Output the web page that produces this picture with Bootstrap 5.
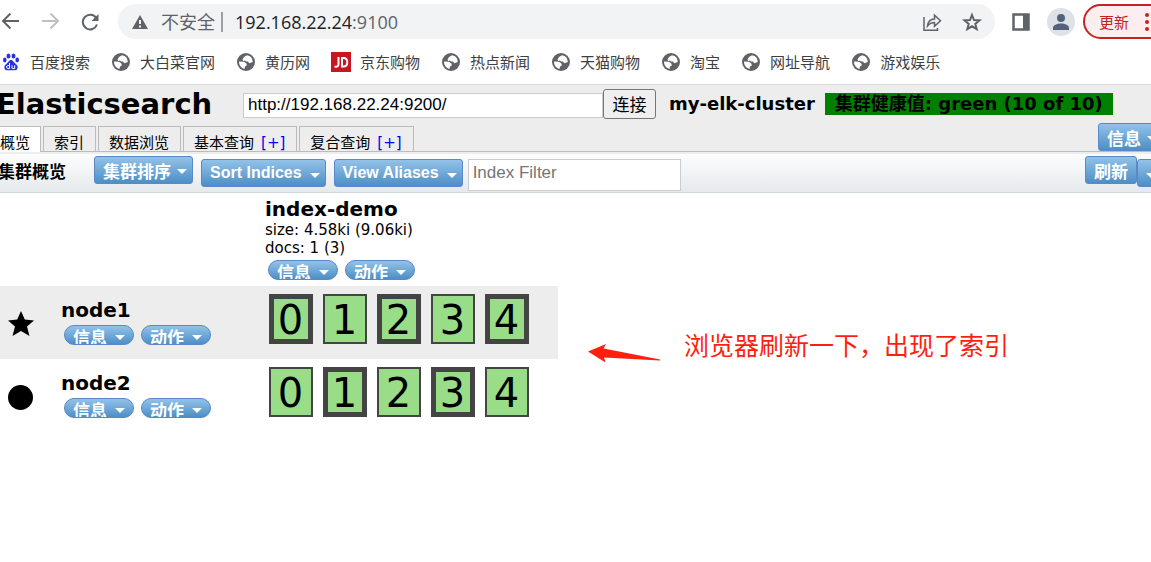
<!DOCTYPE html>
<html lang="zh-CN">
<head>
<meta charset="utf-8">
<meta name="viewport" content="width=device-width, initial-scale=1">
<title>Elasticsearch 集群概览</title>
<link rel="stylesheet" href="https://cdn.jsdelivr.net/npm/bootstrap@5.3.0/dist/css/bootstrap.min.css">
<script src="https://cdn.jsdelivr.net/npm/bootstrap@5.3.0/dist/js/bootstrap.bundle.min.js"></script>
<style>
  body { background: #fff; color: #000; overflow-x: hidden; font: 15px/18px "DejaVu Sans", "Noto Sans CJK SC", sans-serif; }
  a { text-decoration: none; }
  svg { display: block; flex: none; }
  .browser-bar, .bookmarks { font-family: "Open Sans", "Noto Sans CJK SC", sans-serif; color: #3c4043; }
  .browser-bar { height: 43px; margin-right: -30px; }
  .plain-btn { border: 0; background: none; padding: 0; }
  .nav-keys { width: 118px; padding-left: 1px; gap: 22px; }
  .omnibox { height: 35px; border-radius: 18px; background: #f1f3f4; padding: 0 13px; font-size: 18px; line-height: 24px; color: #5f6368; }
  .omnibox .divider { width: 2px; height: 20px; background: #9aa0a6; margin: 0 12px 0 6px; }
  .omnibox .host { color: #202124; }
  .avatar { width: 28px; height: 28px; background: #dee1e6; }
  .update-btn { width: 98px; height: 35px; border: 2px solid #c5221f; border-radius: 18px; background: #fceeee; color: #c5221f; font-size: 15px; padding: 0 14px; }
  .bookmarks { height: 42px; padding: 0 2px 4px; gap: 22px; border-bottom: 1px solid #dadada; }
  .bookmarks a { color: #3c4043; gap: 10px; }
  .es-page { margin: 0 -17px 0 -2px; }
  .es-head { background: #ededed; padding-bottom: 2px; }
  .es-top { height: 41px; padding: 4px 0 7px; }
  .es-title { font-size: 29px; line-height: 30px; width: 247px; margin-left: -2px; }
  .es-url { width: 360px; height: 25px; margin-top: 2px; border: 1px solid #ccc; padding: 0 4px; font: 17px "Liberation Sans", sans-serif; }
  .es-connect { width: 53px; height: 30px; border: 1px solid #767676; border-radius: 3px; background: #efefef; padding: 2px 0 0; font-size: 17px; }
  .es-cluster { font-size: 18px; line-height: 22px; font-weight: 700; margin-left: 13px; }
  .es-health { background: #008000; padding: 0 10px; margin-left: 10px; }
  .es-tabs { height: 26px; gap: 2px; border-bottom: 1px solid #bbb; }
  .es-tab { height: 25px; border: 1px solid #bbb; border-bottom: 0; padding: 6px 11px 0 10px; line-height: 20px; color: #000; white-space: pre; }
  .es-tab.current { background: #fff; height: 26px; padding: 6px 10px 0 1px; }
  .es-tab a { color: #00f; margin-left: 7px; }
  .es-info { margin-right: 5px; }
  .es-tools { height: 39px; padding-right: 6px; background: linear-gradient(#fcfdfd, #e6eaed); border-bottom: 1px solid #d0d5d9; }
  .es-tools h2 { font-size: 17px; line-height: 36px; width: 96px; font-weight: 700; }
  .blue-btn { height: 28px; border: 1px solid #5c87c8; border-radius: 3px; background: linear-gradient(#93c2e8, #4c8fc6); color: #fff; font: bold 16px/26px "Liberation Sans", "Noto Sans CJK SC", sans-serif; padding: 0 5px 0 8px; white-space: nowrap; display: flex; align-items: center; gap: 6px; flex: none; }
  .zh { font-size: 17px; padding-top: 5px; }
  .caret-down { border: 5px solid transparent; border-top-color: #fff; border-bottom: 0; margin-top: 3px; }
  .raised { margin-top: 2px; }
  .latin { margin-top: 5px; gap: 8px; }
  .latin .caret-down { margin-top: 4px; }
  .es-refresh { padding-right: 8px; }
  .es-filter { width: 213px; height: 32px; margin: 5px 0 0 5px; border: 1px solid #ccc; padding: 0 4px 4px; font: 17px "Liberation Sans", sans-serif; }
  .es-filter::placeholder { color: #757575; }
  .pills { gap: 7px; margin: 3px 0 0 3px; }
  .pill-btn { width: 70px; height: 20px; border-radius: 10px; overflow: hidden; padding: 0 8px; font-size: 17px; justify-content: space-between; }
  .pill-btn span { padding-top: 7px; }
  .pill-btn .caret-down { padding: 0; margin-top: 5px; }
  .es-body { gap: 30px; }
  .shards { width: 560px; border-collapse: collapse; flex: none; }
  .shards th, .shards td { vertical-align: top; font-weight: 400; padding: 12px 0 14px; }
  .shards thead th { padding: 4px 0 6px; }
  .shards tbody tr:nth-child(odd) { background: #ededed; }
  .shards .mark-cell { width: 63px; padding: 24px 0 0 9px; }
  .shards .name-cell { width: 204px; }
  .shards .shard-cell { padding: 8px 0 0 4px; }
  .big-name { font-size: 20px; line-height: 24px; font-weight: 700; }
  .shard-row { gap: 10px; }
  .shard { width: 44px; height: 50px; border: 2px solid #444; background: #99dd88; font-size: 40px; line-height: 40px; display: flex; align-items: center; justify-content: center; padding: 2px 1px 0 0; }
  .shard.primary { border-width: 5px; }
  .note { gap: 22px; margin-top: 132px; color: #ff1e10; font: 25px/38px "Noto Sans CJK SC", sans-serif; }
</style>
</head>
<body>
<svg class="d-none">
  <symbol id="globe" viewBox="0 0 18 18">
    <circle cx="9" cy="9" r="9" fill="#5f6368"/>
    <path fill="#fff" d="M10 2.200 7 4 5.500 6.500 6.200 8 8 7.500 9 8.500 11 8.500 12.200 10.200 15.800 9A7 7 0 0 0 10 2.200zM2 8.500 7 8.800 9.400 10.500 9.800 12.500 8 13.500 7.500 15.900A7 7 0 0 1 2 8.500z"/>
  </symbol>
</svg>

<header>
  <div class="browser-bar d-flex align-items-center">
    <div class="nav-keys d-flex align-items-center">
      <button class="plain-btn" aria-label="后退"><svg width="18" height="18" fill="none" stroke="#5f6368" stroke-width="2"><path d="M18 8H2M9.500.500 2 8l7.500 7.500"/></svg></button>
      <button class="plain-btn" aria-label="前进"><svg width="18" height="18" fill="none" stroke="#bdc1c6" stroke-width="2"><path d="M1 8h16M9.500.500 17 8l-7.500 7.500"/></svg></button>
      <button class="plain-btn" aria-label="刷新"><svg width="18" height="18"><path d="M15.200 5A7.300 7.300 0 1 0 16 11.500" fill="none" stroke="#5f6368" stroke-width="2"/><path d="M17.500 1v7h-7z" fill="#5f6368"/></svg></button>
    </div>
    <div class="omnibox d-flex align-items-center flex-grow-1">
      <svg width="18" height="16" class="me-2"><path d="M9 1 17 15H1z" fill="#5f6368"/><path d="M9 6v4M9 11.500v2" stroke="#f1f3f4" stroke-width="2"/></svg>
      <span class="ms-1">不安全</span><span class="divider"></span>
      <span class="flex-grow-1"><span class="host">192.168.22.24</span>:9100</span>
      <button class="plain-btn me-3" aria-label="分享"><svg width="20" height="20" fill="none" stroke="#5f6368" stroke-width="1.500"><path d="M2 5v13.200h13.500V16M5.500 14C6 9.500 8 7.200 12.500 7V3.200l6 5.600-6 5.500v-3.800C9.500 10.500 7.500 11.500 5.500 14z"/></svg></button>
      <button class="plain-btn ms-1" aria-label="收藏"><svg width="20" height="20" fill="none" stroke="#5f6368" stroke-width="2"><path d="m10 3 2 5 5.500.4-4.200 3.500 1.400 5.300L10 14.300l-4.700 2.900 1.400-5.300L2.500 8.400 8 8z"/></svg></button>
    </div>
    <button class="plain-btn ms-3" aria-label="侧边栏"><svg width="20" height="18"><path d="M2.500 1.500h15v15h-15z" fill="#fff" stroke="#5f6368" stroke-width="2.500"/><path d="M12 1h6v16h-6z" fill="#5f6368"/></svg></button>
    <button class="plain-btn avatar rounded-circle d-flex align-items-center justify-content-center ms-3 me-2" aria-label="用户"><svg width="16" height="16" fill="#53617a"><circle cx="8" cy="4" r="4"/><path d="M0 16v-2c0-3 4-4.500 8-4.500s8 1.500 8 4.500v2z"/></svg></button>
    <button class="update-btn d-flex align-items-center"><span class="flex-grow-1 text-start">更新</span><svg width="4" height="20" class="me-3" fill="#c5221f"><circle cx="2" cy="3" r="2"/><circle cx="2" cy="10" r="2"/><circle cx="2" cy="17" r="2"/></svg></button>
  </div>
  <nav class="bookmarks d-flex align-items-center text-nowrap" aria-label="书签">
    <a href="#" class="d-flex align-items-center"><svg width="18" height="18" fill="#2932e1"><ellipse cx="6.500" cy="3" rx="2" ry="2.600"/><ellipse cx="11.500" cy="3" rx="2" ry="2.600"/><ellipse cx="2.800" cy="7" rx="1.800" ry="2.400"/><ellipse cx="15.200" cy="7" rx="1.800" ry="2.400"/><path d="M9 7c-2 0-2.500 2-4 3.200-2 1.600-3 2.800-2.600 4.800.5 2.700 3 2.400 6.600 2.300 3.600.1 6.100.4 6.600-2.300.4-2-.6-3.200-2.600-4.800C11.500 9 11 7 9 7z"/><path d="M7.500 10v5.500H5.800c-1.600 0-1.600-3 0-3h1.700M10 12.300V15q0 .5.500.5h2.200v-3.200" fill="none" stroke="#fff"/></svg>百度搜索</a>
    <a href="#" class="d-flex align-items-center"><svg width="18" height="18"><use href="#globe"/></svg>大白菜官网</a>
    <a href="#" class="d-flex align-items-center"><svg width="18" height="18"><use href="#globe"/></svg>黄历网</a>
    <a href="#" class="d-flex align-items-center"><svg width="18" height="20" overflow="visible"><path d="M-1 0h20v20H-1z" fill="#c81623"/><path d="M6.500 5v7.500c0 2-1.500 2.500-4 2M10 6v8.500h1.500c5 0 5-8.500 0-8.500z" fill="none" stroke="#fff" stroke-width="2"/></svg>京东购物</a>
    <a href="#" class="d-flex align-items-center"><svg width="18" height="18"><use href="#globe"/></svg>热点新闻</a>
    <a href="#" class="d-flex align-items-center"><svg width="18" height="18"><use href="#globe"/></svg>天猫购物</a>
    <a href="#" class="d-flex align-items-center"><svg width="18" height="18"><use href="#globe"/></svg>淘宝</a>
    <a href="#" class="d-flex align-items-center"><svg width="18" height="18"><use href="#globe"/></svg>网址导航</a>
    <a href="#" class="d-flex align-items-center"><svg width="18" height="18"><use href="#globe"/></svg>游戏娱乐</a>
  </nav>
</header>

<main class="es-page">
  <div class="es-head">
    <div class="es-top d-flex align-items-center text-nowrap">
      <h1 class="es-title fw-bold mb-0 flex-shrink-0">Elasticsearch</h1>
      <input class="es-url" type="text" value="http://192.168.22.24:9200/" aria-label="集群地址">
      <button class="es-connect">连接</button>
      <span class="es-cluster">my-elk-cluster</span>
      <span class="es-cluster es-health">集群健康值: green (10 of 10)</span>
    </div>
    <div class="es-tabs d-flex">
      <div class="es-tab current">概览</div>
      <div class="es-tab">索引</div>
      <div class="es-tab">数据浏览</div>
      <div class="es-tab">基本查询<a href="#">[+]</a></div>
      <div class="es-tab">复合查询<a href="#">[+]</a></div>
      <button class="blue-btn es-info ms-auto align-self-end"><span class="zh">信息</span><i class="caret-down"></i></button>
    </div>
  </div>
  <div class="es-tools d-flex align-items-start">
    <h2 class="mb-0 flex-shrink-0">集群概览</h2>
    <button class="blue-btn raised me-2"><span class="zh">集群排序</span><i class="caret-down"></i></button>
    <button class="blue-btn latin me-2">Sort Indices<i class="caret-down"></i></button>
    <button class="blue-btn latin">View Aliases<i class="caret-down"></i></button>
    <input class="es-filter" type="text" placeholder="Index Filter" aria-label="Index Filter">
    <button class="blue-btn es-refresh raised ms-auto"><span class="zh">刷新</span></button>
    <button class="blue-btn latin" aria-label="刷新间隔"><i class="caret-down"></i></button>
  </div>
  <div class="es-body d-flex align-items-start">
    <table class="shards">
      <thead>
        <tr>
          <th class="mark-cell"></th><th class="name-cell"></th>
          <th>
            <div class="big-name">index-demo</div>
            <div>size: 4.58ki (9.06ki)</div>
            <div>docs: 1 (3)</div>
            <div class="pills d-flex"><button class="blue-btn pill-btn"><span>信息</span><i class="caret-down"></i></button><button class="blue-btn pill-btn"><span>动作</span><i class="caret-down"></i></button></div>
          </th>
        </tr>
      </thead>
      <tbody>
        <tr>
          <td class="mark-cell"><svg width="28" height="28"><path d="m14 1 3.800 8.500 9.200.9-7 6.100 2.500 9.500L14 21l-8.500 5L8 16.500l-7-6.100 9.200-.9z"/></svg></td>
          <th class="name-cell">
            <div class="big-name">node1</div>
            <div class="pills d-flex"><button class="blue-btn pill-btn"><span>信息</span><i class="caret-down"></i></button><button class="blue-btn pill-btn"><span>动作</span><i class="caret-down"></i></button></div>
          </th>
          <td class="shard-cell"><div class="shard-row d-flex"><div class="shard primary">0</div><div class="shard">1</div><div class="shard primary">2</div><div class="shard">3</div><div class="shard primary">4</div></div></td>
        </tr>
        <tr>
          <td class="mark-cell"><svg width="28" height="28"><circle cx="13.500" cy="14.500" r="12.500"/></svg></td>
          <th class="name-cell">
            <div class="big-name">node2</div>
            <div class="pills d-flex"><button class="blue-btn pill-btn"><span>信息</span><i class="caret-down"></i></button><button class="blue-btn pill-btn"><span>动作</span><i class="caret-down"></i></button></div>
          </th>
          <td class="shard-cell"><div class="shard-row d-flex"><div class="shard">0</div><div class="shard primary">1</div><div class="shard">2</div><div class="shard primary">3</div><div class="shard">4</div></div></td>
        </tr>
      </tbody>
    </table>
    <div class="note d-flex align-items-end text-nowrap">
      <svg width="74" height="20" fill="#ff1e10"><path d="M0 8.500 18 1l-2.500 4.500L72 16.500v1L16 14.500l1.500 5z"/></svg>
      <span>浏览器刷新一下，出现了索引</span>
    </div>
  </div>
</main>
</body>
</html>
